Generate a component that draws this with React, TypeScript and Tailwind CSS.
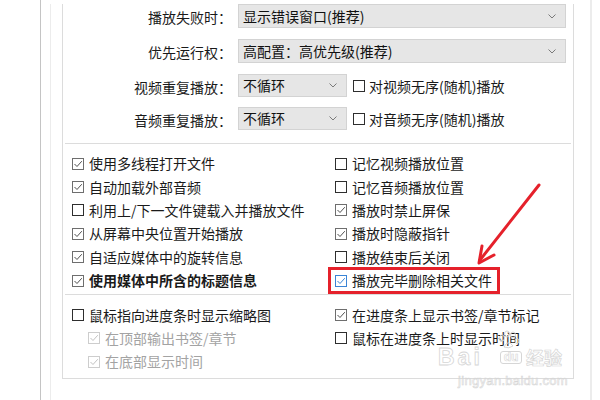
import React from 'react'

type Item = {
  label: string
  checked?: boolean
  bold?: boolean
  highlight?: boolean
  disabled?: boolean
}

const leftItems: Item[] = [
  { label: '使用多线程打开文件', checked: true },
  { label: '自动加载外部音频', checked: true },
  { label: '利用上/下一文件键载入并播放文件' },
  { label: '从屏幕中央位置开始播放', checked: true },
  { label: '自适应媒体中的旋转信息', checked: true },
  { label: '使用媒体中所含的标题信息', checked: true, bold: true },
]

const rightItems: Item[] = [
  { label: '记忆视频播放位置' },
  { label: '记忆音频播放位置' },
  { label: '播放时禁止屏保', checked: true },
  { label: '播放时隐蔽指针', checked: true },
  { label: '播放结束后关闭' },
  { label: '播放完毕删除相关文件', checked: true, highlight: true },
]

function Box({ checked, disabled, highlight }: { checked?: boolean; disabled?: boolean; highlight?: boolean }) {
  const border = highlight
    ? 'border-[#3a84d6]'
    : disabled
      ? 'border-[#cdcdcd]'
      : checked
        ? 'border-[#6e6e6e]'
        : 'border-[#2e2e2e]'
  const stroke = highlight ? '#3a84d6' : disabled ? '#c2c2c2' : '#505050'
  return (
    <span className={`flex h-[12px] w-[12px] shrink-0 items-center justify-center border bg-white ${border}`}>
      {checked && (
        <svg width="10" height="10" viewBox="0 0 10 10">
          <path d="M1.5 5 L4 7.5 L8.8 2.2" fill="none" stroke={stroke} strokeWidth="1" />
        </svg>
      )}
    </span>
  )
}

function Check({ item }: { item: Item }) {
  return (
    <div className="relative flex h-[23.4px] items-center gap-[5px]">
      <Box checked={item.checked} disabled={item.disabled} highlight={item.highlight} />
      <span
        className={`whitespace-nowrap text-[14px] ${item.disabled ? 'text-[#a3a3a3]' : 'text-[#1a1a1a]'} ${item.bold ? 'font-bold' : ''}`}
      >
        {item.label}
      </span>
      {item.highlight && (
        <span className="absolute left-[-7px] top-[-1.5px] h-[27px] w-[172px] border-[3px] border-[#e5212b]" />
      )}
    </div>
  )
}

function Chevron() {
  return (
    <svg width="8" height="5" viewBox="0 0 8 5" className="shrink-0">
      <path d="M0.5 0.5 L4 4 L7.5 0.5" fill="none" stroke="#7a7a7a" strokeWidth="1" />
    </svg>
  )
}

function Select({ value, width, height }: { value: string; width: string; height: string }) {
  return (
    <div
      className={`flex items-center justify-between border border-[#d3d3d3] bg-[#e6e6e6] pl-[4px] pr-[9px] ${width} ${height}`}
    >
      <span className="whitespace-nowrap text-[14px] text-[#111]">{value}</span>
      <Chevron />
    </div>
  )
}

function Row({ label, children, className }: { label: string; children: React.ReactNode; className: string }) {
  return (
    <div className={`flex items-center ${className}`}>
      <div className="w-[169px] pt-[3px] text-right text-[14px] text-[#1a1a1a]">{label}</div>
      <div className="ml-[6px] flex items-center">{children}</div>
    </div>
  )
}

// faint outlined "Baidu经验" watermark in the bottom-right corner
function Watermark() {
  return (
    <div className="pointer-events-none absolute left-[438px] top-[346px] flex w-[130px] flex-col">
      <div className="flex h-[22px] items-center text-transparent">
        <span className="w-[58px] font-['Liberation_Sans',sans-serif] text-[23px] font-bold leading-none tracking-[3px] [-webkit-text-stroke:0.8px_#d6d6d6]">
          Bai
        </span>
        <span className="relative ml-[4px] flex h-[13px] w-[22px] items-center justify-center rounded-[3px] border border-[#d6d6d6] font-['Liberation_Sans',sans-serif] text-[12px] font-bold leading-none [-webkit-text-stroke:0.6px_#d6d6d6]">
          du
          <svg width="24" height="20" viewBox="0 0 24 20" className="absolute left-[-4px] top-[-22px]">
            <g fill="none" stroke="#d6d6d6" strokeWidth="1">
              <ellipse cx="5" cy="8" rx="2.5" ry="3" />
              <ellipse cx="10" cy="4" rx="2.5" ry="3" />
              <ellipse cx="16" cy="5" rx="2.5" ry="3" />
              <ellipse cx="20" cy="11" rx="2" ry="2.5" />
              <path d="M7 17 Q11 9 16 16 Q12 19 7 17 Z" />
            </g>
          </svg>
        </span>
        <span className="ml-[4px] text-[18px] font-bold leading-none [-webkit-text-stroke:0.7px_#d6d6d6]">
          经验
        </span>
      </div>
      <div className="mt-[6px] text-right font-['Liberation_Sans',sans-serif] text-[13px] leading-none tracking-[0.3px] text-transparent [-webkit-text-stroke:0.6px_#d6d6d6]">
        jingyan.baidu.com
      </div>
    </div>
  )
}

export default function App() {
  return (
    <div className="relative h-[400px] w-[600px] overflow-hidden bg-white font-['Noto_Sans_CJK_SC',sans-serif]">
      <div className="flex h-full">
        <div className="w-[40px] shrink-0" />
        <div className="h-full w-[552px] shrink-0 border-l border-r-2 border-l-[#c4c4c4] border-r-[#ececec]">
          <div className="ml-[9px] h-full border-l border-[#ececec] pl-[11px]">
            <div className="w-[512px] border-x border-b border-[#dcdcdc]">
              <Row label="播放失败时：" className="mt-[4px] h-[24px]">
                <Select value="显示错误窗口(推荐)" width="w-[328px]" height="h-[24px]" />
              </Row>
              <Row label="优先运行权：" className="mt-[11px] h-[24px]">
                <Select value="高配置：高优先级(推荐)" width="w-[328px]" height="h-[24px]" />
              </Row>
              <Row label="视频重复播放：" className="mt-[11px] h-[23px]">
                <Select value="不循环" width="w-[109px]" height="h-[23px]" />
                <div className="ml-[6px] flex items-center gap-[4px]">
                  <Box />
                  <span className="pt-[2px] text-[14px] text-[#1a1a1a]">对视频无序(随机)播放</span>
                </div>
              </Row>
              <Row label="音频重复播放：" className="mt-[10px] h-[23px]">
                <Select value="不循环" width="w-[109px]" height="h-[23px]" />
                <div className="ml-[6px] flex items-center gap-[4px]">
                  <Box />
                  <span className="pt-[2px] text-[14px] text-[#1a1a1a]">对音频无序(随机)播放</span>
                </div>
              </Row>

              <div className="mx-[2px] mt-[13px] border-t border-[#dcdcdc]" />

              <div className="grid grid-cols-[263px_1fr] pb-[2px] pl-[9px] pt-[8px]">
                <div className="flex flex-col">
                  {leftItems.map((it) => (
                    <Check key={it.label} item={it} />
                  ))}
                </div>
                <div className="flex flex-col">
                  {rightItems.map((it) => (
                    <Check key={it.label} item={it} />
                  ))}
                </div>
              </div>

              <div className="mx-[2px] border-t border-[#dcdcdc]" />

              <div className="grid grid-cols-[263px_1fr] pb-[4px] pl-[9px] pt-[8px]">
                <div className="flex flex-col">
                  <Check item={{ label: '鼠标指向进度条时显示缩略图' }} />
                  <div className="flex flex-col pl-[16px]">
                    <Check item={{ label: '在顶部输出书签/章节', checked: true, disabled: true }} />
                    <Check item={{ label: '在底部显示时间', checked: true, disabled: true }} />
                  </div>
                </div>
                <div className="flex flex-col">
                  <Check item={{ label: '在进度条上显示书签/章节标记', checked: true }} />
                  <Check item={{ label: '鼠标在进度条上时显示时间' }} />
                </div>
              </div>
            </div>
          </div>
        </div>
      </div>

      <svg className="pointer-events-none absolute left-0 top-0" width="600" height="400">
        <g stroke="#e5212b" strokeWidth="3" fill="none" strokeLinecap="round" strokeLinejoin="round">
          <line x1="539" y1="185" x2="480" y2="260" />
          <polyline points="494,255 479,263 482,246" />
        </g>
      </svg>

      <Watermark />
    </div>
  )
}
